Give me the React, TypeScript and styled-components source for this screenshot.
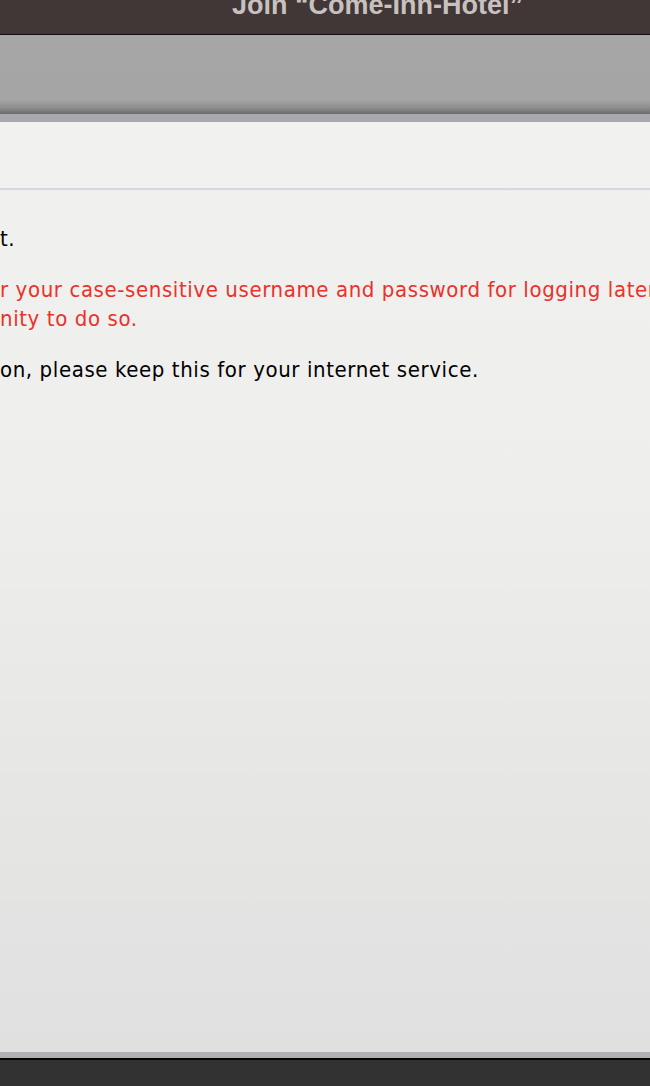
import React from "react";
import styled, { createGlobalStyle } from "styled-components";

const GlobalStyle = createGlobalStyle`
  html, body {
    margin: 0;
    padding: 0;
    background: #323232;
  }
  body {
    font-family: "DejaVu Sans Condensed", "DejaVu Sans", sans-serif;
  }
`;

const Window = styled.div`
  width: 650px;
  height: 1086px;
  display: flex;
  flex-direction: column;
  overflow: hidden;
`;

const TitleBar = styled.div`
  height: 34px;
  flex: none;
  background: #413736;
  border-bottom: 1px solid #141010;
  display: flex;
  justify-content: flex-end;
  overflow: hidden;
`;

const Title = styled.h1`
  margin: -11px 127px 0 0;
  font-family: "Liberation Sans", Arial, sans-serif;
  font-weight: 700;
  font-size: 27px;
  line-height: 32px;
  color: #c9c1c0;
  white-space: nowrap;
`;

const Toolbar = styled.div`
  height: 79px;
  flex: none;
  background: linear-gradient(
    to bottom,
    #a6a6a6 0%,
    #a5a5a5 82%,
    #8e8e8e 92%,
    #6b6b6b 100%
  );
`;

const Edge = styled.div<{ $h: number; $color: string }>`
  height: ${(p) => p.$h}px;
  flex: none;
  background: ${(p) => p.$color};
`;

const Panel = styled.div`
  flex: 1;
  min-height: 0;
  display: flex;
  flex-direction: column;
  background: linear-gradient(to bottom, #f1f1ef 0%, #eeeeec 40%, #dfe0df 100%);
  overflow: hidden;
`;

const PanelHeader = styled.div`
  height: 66px;
  flex: none;
  border-bottom: 2px solid #d7d7df;
  box-shadow: 0 1px 0 #ececee;
`;

const Content = styled.div`
  padding-top: 34px;
  display: flex;
  flex-direction: column;
  gap: 22px;
`;

const Para = styled.p<{ $warn?: boolean }>`
  margin: 0;
  font-size: 22px;
  line-height: 29px;
  letter-spacing: 0.6px;
  white-space: nowrap;
  color: ${(p) => (p.$warn ? "#e8322b" : "#000")};
`;

const BottomLine = styled.div`
  height: 2px;
  flex: none;
  background: #050505;
`;

const Dock = styled.div`
  height: 26px;
  flex: none;
  background: #323232;
`;

export default function App() {
  return (
    <>
      <GlobalStyle />
      <Window>
        <TitleBar>
          <Title>Join “Come-Inn-Hotel”</Title>
        </TitleBar>
        <Toolbar />
        <Edge $h={8} $color="#a9a8ad" />
        <Panel>
          <PanelHeader />
          <Content>
            <Para>t.</Para>
            <Para $warn>
              r your case-sensitive username and password for logging later
              <br />
              nity to do so.
            </Para>
            <Para>on, please keep this for your internet service.</Para>
          </Content>
        </Panel>
        <Edge $h={6} $color="#b1b0b5" />
        <BottomLine />
        <Dock />
      </Window>
    </>
  );
}
